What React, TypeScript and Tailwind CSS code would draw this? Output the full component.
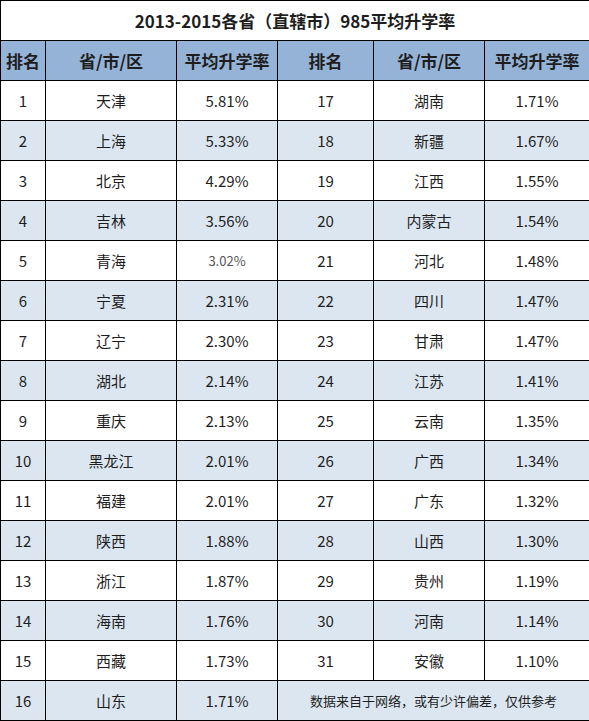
import React from 'react';

const rows: [string, string, string, string, string, string][] = [
  ['1', '天津', '5.81%', '17', '湖南', '1.71%'],
  ['2', '上海', '5.33%', '18', '新疆', '1.67%'],
  ['3', '北京', '4.29%', '19', '江西', '1.55%'],
  ['4', '吉林', '3.56%', '20', '内蒙古', '1.54%'],
  ['5', '青海', '3.02%', '21', '河北', '1.48%'],
  ['6', '宁夏', '2.31%', '22', '四川', '1.47%'],
  ['7', '辽宁', '2.30%', '23', '甘肃', '1.47%'],
  ['8', '湖北', '2.14%', '24', '江苏', '1.41%'],
  ['9', '重庆', '2.13%', '25', '云南', '1.35%'],
  ['10', '黑龙江', '2.01%', '26', '广西', '1.34%'],
  ['11', '福建', '2.01%', '27', '广东', '1.32%'],
  ['12', '陕西', '1.88%', '28', '山西', '1.30%'],
  ['13', '浙江', '1.87%', '29', '贵州', '1.19%'],
  ['14', '海南', '1.76%', '30', '河南', '1.14%'],
  ['15', '西藏', '1.73%', '31', '安徽', '1.10%'],
];

const headers = ['排名', '省/市/区', '平均升学率', '排名', '省/市/区', '平均升学率'];

const cell = 'border border-black h-[40px] p-0 text-center align-middle';

export default function App() {
  return (
    <div
      className="w-[589px] h-[721px] bg-white text-[#1e1e1e]"
      style={{ fontFamily: '"Noto Sans CJK SC", "Noto Sans", sans-serif' }}
    >
      <table className="w-[589px] table-fixed border-collapse text-[15px] leading-none">
        <colgroup>
          <col className="w-[45px]" />
          <col className="w-[131px]" />
          <col className="w-[101px]" />
          <col className="w-[96px]" />
          <col className="w-[111px]" />
          <col className="w-[105px]" />
        </colgroup>
        <tbody>
          <tr>
            <td colSpan={6} className={`${cell} text-[17px] font-bold`}>
              2013-2015各省（直辖市）985平均升学率
            </td>
          </tr>
          <tr className="bg-[#95b3d7]">
            {headers.map((h, i) => (
              <td key={i} className={`${cell} text-[17px] font-bold`}>
                {h}
              </td>
            ))}
          </tr>
          {rows.map((r, i) => (
            <tr key={r[0]} className={i % 2 === 1 ? 'bg-[#dce6f1]' : 'bg-white'}>
              {r.map((v, j) => (
                <td
                  key={j}
                  className={
                    v === '3.02%' ? `${cell} text-[13px] text-[#555]` : cell
                  }
                >
                  {v}
                </td>
              ))}
            </tr>
          ))}
          <tr className="bg-[#dce6f1]">
            <td className={cell}>16</td>
            <td className={cell}>山东</td>
            <td className={cell}>1.71%</td>
            <td colSpan={3} className={`${cell} text-[13px]`}>
              数据来自于网络，或有少许偏差，仅供参考
            </td>
          </tr>
        </tbody>
      </table>
    </div>
  );
}
